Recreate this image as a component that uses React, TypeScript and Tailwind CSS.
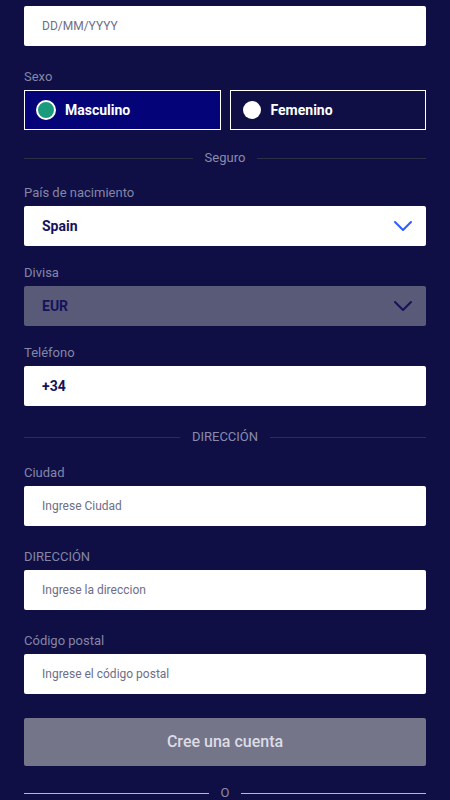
const FONT = { fontFamily: "Roboto, 'Liberation Sans', sans-serif" };

function Chevron({ color }: { color: string }) {
  return (
    <svg viewBox="0 0 20 12" className="h-[12px] w-[20px]" fill="none">
      <path d="M2 2l8 8 8-8" stroke={color} strokeWidth="2" strokeLinecap="round" strokeLinejoin="round" />
    </svg>
  );
}

function Label({ children }: { children: React.ReactNode }) {
  return <div className="mb-[5px] h-4 text-[13px] leading-4 text-[#8585a6]">{children}</div>;
}

function TextInput({ placeholder }: { placeholder: string }) {
  return (
    <div className="flex h-10 items-center rounded-[2px] bg-white px-[18px] text-[12px] text-[#6e6e86]">
      {placeholder}
    </div>
  );
}

function Divider({ text, light }: { text: string; light?: boolean }) {
  const line = light ? "bg-[#b8b8cc]" : "bg-[#2c2f45]";
  return (
    <div className="flex items-center gap-3">
      <div className={`h-px flex-1 ${line}`} />
      <span className="text-[13px] leading-4 text-[#8a8aaa]">{text}</span>
      <div className={`h-px flex-1 ${line}`} />
    </div>
  );
}

export default function App() {
  return (
    <div className="min-h-[800px] bg-[#0f0f45] px-6 pt-[6px]" style={FONT}>
      <TextInput placeholder="DD/MM/YYYY" />

      <div className="mt-[23px]">
        <Label>Sexo</Label>
        <div className="grid grid-cols-2 gap-[9px]">
          <div className="flex h-10 items-center gap-[9px] border border-white bg-[#040478] px-[11px]">
            <span className="h-[20px] w-[20px] rounded-full border-2 border-white bg-[#1a9c7c]" />
            <span className="text-[14px] font-bold text-white">Masculino</span>
          </div>
          <div className="flex h-10 items-center gap-[10px] border border-white px-[12px]">
            <span className="h-[18px] w-[18px] rounded-full bg-white" />
            <span className="text-[14px] font-bold text-white">Femenino</span>
          </div>
        </div>
      </div>

      <div className="mt-[20px]">
        <Divider text="Seguro" />
      </div>

      <div className="mt-[19px]">
        <Label>País de nacimiento</Label>
        <div className="flex h-10 items-center justify-between rounded-[2px] bg-white pl-[18px] pr-[13px]">
          <span className="text-[14px] font-bold text-[#14135a]">Spain</span>
          <Chevron color="#2f5bff" />
        </div>
      </div>

      <div className="mt-[19px]">
        <Label>Divisa</Label>
        <div className="flex h-10 items-center justify-between rounded-[2px] bg-[#595978] pl-[18px] pr-[13px]">
          <span className="text-[14px] font-bold text-[#14135a]">EUR</span>
          <Chevron color="#14135a" />
        </div>
      </div>

      <div className="mt-[19px]">
        <Label>Teléfono</Label>
        <div className="flex h-10 items-center rounded-[2px] bg-white px-[18px]">
          <span className="text-[14px] font-bold text-[#14135a]">+34</span>
        </div>
      </div>

      <div className="mt-[23px]">
        <Divider text="DIRECCIÓN" />
      </div>

      <div className="mt-[20px]">
        <Label>Ciudad</Label>
        <TextInput placeholder="Ingrese Ciudad" />
      </div>

      <div className="mt-[23px]">
        <Label>DIRECCIÓN</Label>
        <TextInput placeholder="Ingrese la direccion" />
      </div>

      <div className="mt-[23px]">
        <Label>Código postal</Label>
        <TextInput placeholder="Ingrese el código postal" />
      </div>

      <button
        type="button"
        className="mt-[24px] flex h-12 w-full items-center justify-center rounded-[2px] bg-[#757589] text-[16px] font-medium text-[#dcdce6]"
      >
        Cree una cuenta
      </button>

      <div className="mt-[19px] pb-6">
        <Divider text="O" light />
      </div>
    </div>
  );
}
